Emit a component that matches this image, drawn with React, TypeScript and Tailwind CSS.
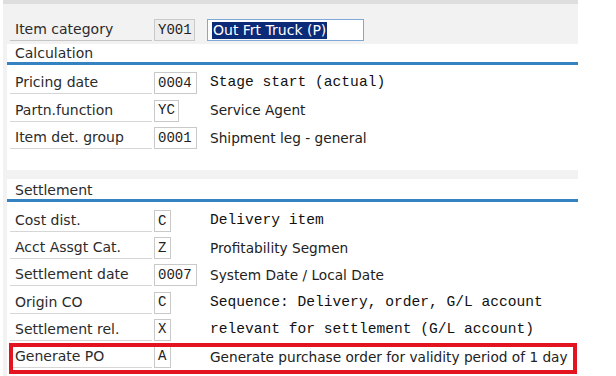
import React from 'react';

type Row = {
  label: string;
  code: string;
  codeWidth: string;
  text: string;
  mono?: boolean;
  marked?: boolean;
};

const calculation: Row[] = [
  { label: 'Pricing date', code: '0004', codeWidth: 'w-[43px]', text: 'Stage start (actual)', mono: true },
  { label: 'Partn.function', code: 'YC', codeWidth: 'w-[25px]', text: 'Service Agent' },
  { label: 'Item det. group', code: '0001', codeWidth: 'w-[43px]', text: 'Shipment leg - general' },
];

const settlement: Row[] = [
  { label: 'Cost dist.', code: 'C', codeWidth: 'w-[17px]', text: 'Delivery item', mono: true },
  { label: 'Acct Assgt Cat.', code: 'Z', codeWidth: 'w-[17px]', text: 'Profitability Segmen' },
  { label: 'Settlement date', code: '0007', codeWidth: 'w-[43px]', text: 'System Date / Local Date' },
  { label: 'Origin CO', code: 'C', codeWidth: 'w-[17px]', text: 'Sequence: Delivery, order, G/L account', mono: true },
  { label: 'Settlement rel.', code: 'X', codeWidth: 'w-[17px]', text: 'relevant for settlement (G/L account)', mono: true },
  { label: 'Generate PO', code: 'A', codeWidth: 'w-[17px]', text: 'Generate purchase order for validity period of 1 day', marked: true },
];

const sans = "font-['DejaVu_Sans',sans-serif]";
const mono = "font-['Liberation_Mono',monospace]";

const FieldRow: React.FC<{ row: Row }> = ({ row }) => (
  <div className="relative flex items-center h-[22px] ml-[3px] mr-[1px]">
    {/* red annotation frame */}
    {row.marked && (
      <span className="absolute -left-[1px] right-0 -top-[3px] -bottom-[6px] border-[4px] border-[#e3141f] pointer-events-none" />
    )}
    <div className={`w-[142px] h-full flex items-center pl-[5px] border-b border-[#d6d6d6] bg-white text-[14px] text-[#2b2b2b] ${sans}`}>
      {row.label}
    </div>
    <div className="w-[58px] h-full pl-[2px] flex">
      <div className={`${row.codeWidth} h-full border border-[#c9c9c9] bg-white flex items-center pl-[3px] text-[14px] text-[#222] ${mono}`}>
        {row.code}
      </div>
    </div>
    <div className={`whitespace-nowrap ${row.mono ? `${mono} text-[14.6px] text-[#111]` : `${sans} text-[13.7px] text-[#222]`}`}>
      {row.text}
    </div>
  </div>
);

const Group: React.FC<{ title: string; rows: Row[]; head: string; first: string; gap: string; pad: string }> = ({
  title,
  rows,
  head,
  first,
  gap,
  pad,
}) => (
  <div className={`ml-[4px] bg-white ${pad}`}>
    <div className={`${head} pl-[8px] flex items-end border-b-[3px] border-[#3582c2] text-[14px] leading-[17px] text-[#2b2b2b] ${sans}`}>
      {title}
    </div>
    <div className={`flex flex-col ${gap} ${first}`}>
      {rows.map((r) => (
        <FieldRow key={r.label} row={r} />
      ))}
    </div>
  </div>
);

export default function App() {
  return (
    <div className="w-[616px] h-[376px] bg-white overflow-hidden">
      <div className="ml-[3px] w-[575px] h-[376px] bg-[#f2f2f2] border-t-4 border-[#dedede]">
        {/* header line */}
        <div className="h-[40px] flex items-start pt-[15px] pl-[7px]">
          <div className={`w-[142px] h-[22px] flex items-center pl-[5px] border-b border-[#c4c4c4] text-[14px] text-[#2b2b2b] ${sans}`}>
            Item category
          </div>
          <div className={`ml-[2px] w-[41px] h-[22px] border border-[#c9c9c9] bg-[#ededed] flex items-center pl-[3px] text-[14px] text-[#222] ${mono}`}>
            Y001
          </div>
          <div className="ml-[12px] w-[157px] h-[22px] border border-[#7ea8d6] bg-white flex items-center pl-[4px]">
            <span className={`bg-[#0b2a78] text-white text-[14px] leading-[17px] px-[1px] ${sans}`}>Out Frt Truck (P)</span>
          </div>
        </div>

        <Group title="Calculation" rows={calculation} head="h-[21px]" first="mt-[7px]" gap="gap-[5.5px]" pad="pb-[21px]" />
        <div className="h-[9px]" />
        <Group title="Settlement" rows={settlement} head="h-[23px]" first="mt-[8px]" gap="gap-[5.2px]" pad="pb-[20px]" />
      </div>
    </div>
  );
}
